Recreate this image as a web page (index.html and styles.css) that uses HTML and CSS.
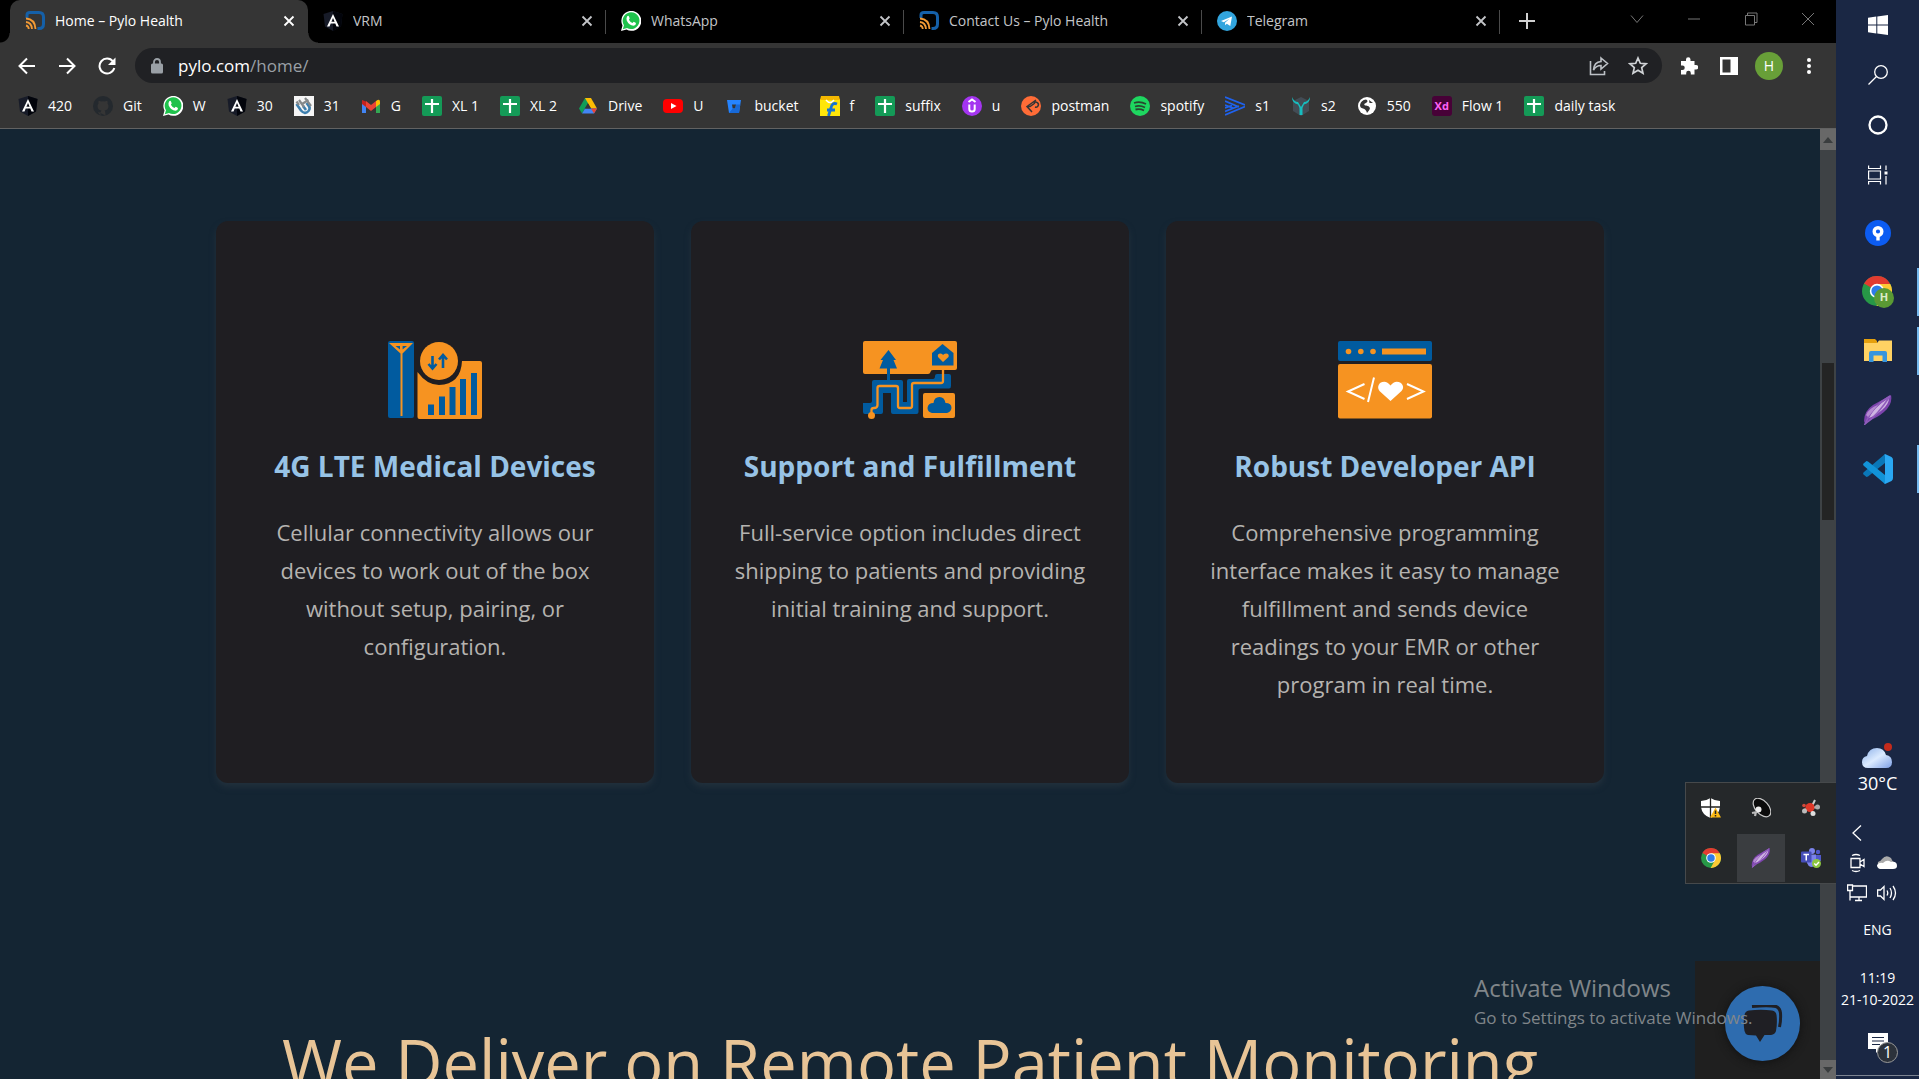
FILE: index.html
```html
<!DOCTYPE html>
<html lang="en">
<head>
<meta charset="utf-8">
<title>Home – Pylo Health</title>
<link rel="stylesheet" href="styles.css">
</head>
<body>
<svg class="defs" aria-hidden="true">
  <symbol id="pylo" viewBox="0 0 20 20"><path d="M2 7V4Q2 1.500 5 1.500H14Q18.500 1.500 18.500 6V13Q18.500 17.500 14 17.500H12.500" fill="none" stroke="#1560a8" stroke-width="3"/><path d="M1 7.500Q10 8 10.500 18M1 11Q6.500 11.500 7 18M1 14.500Q3.500 15 3.800 18" fill="none" stroke="#f29a35" stroke-width="1.800"/></symbol>
  <symbol id="angular" viewBox="0 0 20 20"><path d="M10 0 19.500 3 18 15.500 10 20 2 15.500 .5 3z" fill="#171b28"/><path d="M10 0 19.500 3 18 15.500 10 20z" fill="#02040b"/><path d="M10 3 4 15.500H6.500L7.700 12.500H12.300L13.500 15.500H16zM10 7 11.600 10.700H8.400z" fill="#fff" fill-rule="evenodd"/></symbol>
  <symbol id="whatsapp" viewBox="0 0 20 20"><path d="M0 20 1.500 14.500A10 10 0 1 1 5.500 18.600z" fill="#fff"/><path d="M1.800 18.200 3 14.200A8.400 8.400 0 1 1 6 17z" fill="#1fc24c"/><path d="M6.200 5.300Q7.500 4 8.200 6L8.700 7.500 7.900 8.700Q9.200 11.200 11.500 12L12.700 10.800 15 12Q15 14.500 12.500 14.800 8 14.500 5.700 9.500 5 7 6.200 5.300z" fill="#fff"/></symbol>
  <symbol id="telegram" viewBox="0 0 20 20"><circle cx="10" cy="10" r="10" fill="#32a5de"/><path d="M4 10 15 5.500 13.300 15 9.800 12.700 8.200 14.200 8 11.800 12.500 7.700 6.800 11.200z" fill="#fff"/></symbol>
  <symbol id="github" viewBox="0 0 20 20"><circle cx="10" cy="10" r="10" fill="#24292e"/><path d="M7.500 19.500V16.500Q4.500 17 3.500 14.500M7.500 17Q8 14.800 8.500 14.500 4.500 14 4.500 10 4.500 8.500 5.500 7.500 5 6 5.700 4.700 7 4.800 8 5.600 10 5 12 5.600 13 4.800 14.300 4.700 15 6 14.500 7.500 15.500 8.500 15.500 10 15.500 14 11.500 14.500 12.500 15 12.500 19.500z" fill="#353535"/></symbol>
  <symbol id="sheets" viewBox="0 0 20 20"><rect width="20" height="20" rx="2" fill="#149a57"/><path d="M10 3V17M3 8H17" stroke="#fff" stroke-width="2.200"/></symbol>
  <symbol id="close" viewBox="0 0 12 12"><path d="M1.500 1.500 10.500 10.500M10.500 1.500 1.500 10.500" stroke="currentColor" stroke-width="1.800"/></symbol>
  <symbol id="chrome" viewBox="0 0 30 30"><circle cx="15" cy="15" r="15" fill="#279847"/><path d="M15 15 2 7.500A15 15 0 0 1 28 7.500z" fill="#e23b30"/><path d="M15 8H28.300A15 15 0 0 1 14.500 30L21 18z" fill="#fcc934"/><circle cx="15" cy="15" r="7.200" fill="#fff"/><circle cx="15" cy="15" r="5.600" fill="#2e7bea"/></symbol>
  <symbol id="feather" viewBox="0 0 28 30"><path d="M27 0Q29 9 20 17 13 23 4 26L1.500 30 0 26Q0 16 9 10 18 5 27 0z" fill="#7c43ac"/><path d="M25 3Q25 9 18 15 11 21 5 23 10 12 25 3z" fill="#ceb4e2"/><path d="M26 1Q8 11 1 29 14 20 26 1z" fill="none" stroke="#8f5cbb" stroke-width="1.500"/><path d="M2 20Q5 13 14 10L4 22z" fill="#b58bd1"/></symbol>
  <symbol id="cloud" viewBox="0 0 32 22"><path d="M7 21Q1 21 1 15 1 10 6 9 8 1 16 1 23 1 25 8 31 9 31 15 31 21 25 21z" fill="url(#sky)"/></symbol>
  <linearGradient id="sky" x1="0" y1="0" x2="1" y2="1"><stop offset="0" stop-color="#89aee8"/><stop offset=".5" stop-color="#dcebff"/><stop offset="1" stop-color="#7d9fe5"/></linearGradient>
</svg>

<div class="desktop">
  <div class="browser">
    <div class="tabstrip">
      <div class="tabs" role="tablist">
        <div class="tab active" role="tab"><svg class="fav"><use href="#pylo"/></svg><span>Home – Pylo Health</span><button class="close" aria-label="Close tab"><svg><use href="#close"/></svg></button></div>
        <div class="tab" role="tab"><svg class="fav"><use href="#angular"/></svg><span>VRM</span><button class="close" aria-label="Close tab"><svg><use href="#close"/></svg></button></div>
        <div class="tab" role="tab"><svg class="fav"><use href="#whatsapp"/></svg><span>WhatsApp</span><button class="close" aria-label="Close tab"><svg><use href="#close"/></svg></button></div>
        <div class="tab" role="tab"><svg class="fav"><use href="#pylo"/></svg><span>Contact Us – Pylo Health</span><button class="close" aria-label="Close tab"><svg><use href="#close"/></svg></button></div>
        <div class="tab" role="tab"><svg class="fav"><use href="#telegram"/></svg><span>Telegram</span><button class="close" aria-label="Close tab"><svg><use href="#close"/></svg></button></div>
      </div>
      <button class="newtab" aria-label="New tab"><svg width="16" height="16" viewBox="0 0 16 16"><path d="M8 0V16M0 8H16" stroke="#d0d0d0" stroke-width="2"/></svg></button>
      <div class="wincontrols">
        <button aria-label="Search tabs"><svg width="14" height="14" viewBox="0 0 14 14"><path d="M1 3.500 7 10.500 13 3.500"/></svg></button>
        <button aria-label="Minimize"><svg width="14" height="14" viewBox="0 0 14 14"><path d="M1 7H13"/></svg></button>
        <button aria-label="Restore"><svg width="14" height="14" viewBox="0 0 14 14"><path d="M1.500 3.500H10.500V13H1.500zM3.500 3.500V1H13V10.500H10.500"/></svg></button>
        <button aria-label="Close"><svg width="14" height="14" viewBox="0 0 14 14"><path d="M1 1 13 13M13 1 1 13"/></svg></button>
      </div>
    </div>

    <div class="toolbar">
      <div class="nav">
        <button aria-label="Back"><svg width="18" height="18" viewBox="0 0 18 18"><path d="M17 9H2M9 1.500 1.500 9 9 16.500" fill="none" stroke="#fff" stroke-width="2"/></svg></button>
        <button aria-label="Forward"><svg width="18" height="18" viewBox="0 0 18 18"><path d="M1 9H16M9 1.500 16.500 9 9 16.500" fill="none" stroke="#fff" stroke-width="2"/></svg></button>
        <button aria-label="Reload"><svg width="18" height="18" viewBox="0 0 18 18"><path d="M15 4.500A7.500 7.500 0 1 0 16.300 11" fill="none" stroke="#fff" stroke-width="2"/><path d="M17.500 .5V8H10z" fill="#fff"/></svg></button>
      </div>
      <div class="omnibox">
        <svg width="12" height="16" viewBox="0 0 12 16"><rect y="5.500" width="12" height="10" rx="1.500" fill="#9aa0a6"/><path d="M3 6V4A3 3 0 0 1 9 4V6" fill="none" stroke="#9aa0a6" stroke-width="1.800"/></svg>
        <p class="url">pylo.com<span>/home/</span></p>
        <button aria-label="Share"><svg width="20" height="20" viewBox="0 0 20 20" fill="none" stroke="#bdc1c6" stroke-width="1.600"><path d="M1.500 5V18.500H15.500V15"/><path d="M12 2 18.500 7.500 12 13V9.500Q7 9.500 4.500 14 5 6 12 5.500z"/></svg></button>
        <button aria-label="Bookmark this page"><svg width="20" height="20" viewBox="0 0 20 20"><path d="M10 2 12.300 7.300 18 7.800 13.700 11.600 15 17.300 10 14.300 5 17.300 6.300 11.600 2 7.800 7.700 7.300z" fill="none" stroke="#d0d3d6" stroke-width="1.700"/></svg></button>
      </div>
      <div class="tools">
        <button aria-label="Extensions"><svg width="18" height="18" viewBox="0 0 18 18"><path d="M2 4H6V2.500A2.200 2.200 0 0 1 10.500 2.500V4H14.500V8H16A2.200 2.200 0 0 1 16 12.500H14.500V17.500H10.800V16A2.300 2.300 0 0 0 6.200 16V17.500H1V13H2.500A2.200 2.200 0 0 0 2.500 8.500H1V4z" fill="#fff"/></svg></button>
        <button aria-label="Side panel"><svg width="18" height="18" viewBox="0 0 18 18"><path d="M0 0H18V18H0zM2.500 2.500V15.500H10.500V2.500z" fill="#fff" fill-rule="evenodd"/></svg></button>
        <button aria-label="Profile"><span class="avatar">H</span></button>
        <button aria-label="Menu"><svg width="4" height="16" viewBox="0 0 4 16" fill="#fff"><circle cx="2" cy="2" r="2"/><circle cx="2" cy="8" r="2"/><circle cx="2" cy="14" r="2"/></svg></button>
      </div>
    </div>

    <nav class="bookmarks">
      <a href="#"><svg><use href="#angular"/></svg>420</a>
      <a href="#"><svg><use href="#github"/></svg>Git</a>
      <a href="#"><svg><use href="#whatsapp"/></svg>W</a>
      <a href="#"><svg><use href="#angular"/></svg>30</a>
      <a href="#"><svg viewBox="0 0 20 20"><rect width="20" height="20" fill="#f5f5f5"/><path d="M2.500 8 7 14.500Q11 19 14.500 15 17 12 14 9L12.500 7M9 10 12 14" fill="none" stroke="#3d7fae" stroke-width="2.600"/><path d="M5 4 10 11M11 2 17 10M8 8 14.500 4M2.500 5.500 5 9" stroke="#85898b" stroke-width="2.200"/></svg>31</a>
      <a href="#"><svg viewBox="0 0 20 20"><path d="M1 5V17H5V9z" fill="#4285f4"/><path d="M19 5V17H15V9z" fill="#34a853"/><path d="M1 4 5 5.500V11L1 8z" fill="#c5221f"/><path d="M5 5 10 9 15 5V11L10 15 5 11z" fill="#ea4335"/><path d="M15 5Q19 2 19 6V8L15 11z" fill="#fbbc04"/></svg>G</a>
      <a href="#"><svg><use href="#sheets"/></svg>XL 1</a>
      <a href="#"><svg><use href="#sheets"/></svg>XL 2</a>
      <a href="#"><svg viewBox="0 0 20 20"><path d="M7 2H10L10 7 4 17.500 1 12.500z" fill="#109d58"/><path d="M7 2H13L19 12.500H13z" fill="#fbbc04"/><path d="M4 17.500 7 12.500H19L16 17.500z" fill="#4285f4"/><path d="M13 12.500H19L16 17.500z" fill="#ea4335"/><path d="M10 7.500 13 12.500H7z" fill="#353535"/></svg>Drive</a>
      <a href="#"><svg viewBox="0 0 20 20"><rect y="3" width="20" height="14" rx="4" fill="#f00"/><path d="M8 7 13.500 10 8 13z" fill="#fff"/></svg>U</a>
      <a href="#"><svg viewBox="0 0 20 20"><path d="M3 4H17L15 17H5zM8 8.500 8.700 12.500H11.300L12 8.500z" fill="#2684ff" fill-rule="evenodd"/><path d="M12 8.500H16.300L15 17H5L8.700 12.500H11.300z" fill="#1769d8"/></svg>bucket</a>
      <a href="#"><svg viewBox="0 0 20 20"><path d="M0 3H20V20H0z" fill="#ffe60a"/><path d="M1 0H19L20 4H0z" fill="#f4b800"/><path d="M6 4Q10 9 14 4" fill="none" stroke="#fff" stroke-width="1.500"/><path d="M17 8Q12 6 11 12L8.500 20M7 14H15" fill="none" stroke="#1773d2" stroke-width="2.800"/></svg>f</a>
      <a href="#"><svg><use href="#sheets"/></svg>suffix</a>
      <a href="#"><svg viewBox="0 0 20 20"><circle cx="10" cy="10" r="10" fill="#a435f0"/><path d="M6.500 6 10 3.500 13.500 6M7.300 8.500V13Q7.300 15.500 10 15.500 12.700 15.500 12.700 13V8.500" fill="none" stroke="#fff" stroke-width="2"/></svg>u</a>
      <a href="#"><svg viewBox="0 0 20 20"><circle cx="10" cy="10" r="10" fill="#ff6c37"/><path d="M15 4 6 10.500 11 16M6 10.500H9L14 7M13 7A2.500 2.500 0 1 1 14 11" fill="none" stroke="#353535" stroke-width="1.500"/></svg>postman</a>
      <a href="#"><svg viewBox="0 0 20 20"><circle cx="10" cy="10" r="10" fill="#1ed760"/><path d="M4 7Q10 5 16 8M5 10.500Q10 9 15 11.500M5.500 13.500Q10 12.500 14 14.500" fill="none" stroke="#29452f" stroke-width="1.800"/></svg>spotify</a>
      <a href="#"><svg viewBox="0 0 20 20"><path d="M0 1 20 9M0 5 14 11M0 9 8 12M0 19 20 10.500M0 15.500 14 10M0 12 7 9.500" stroke="#1f62ee" stroke-width="1.800"/></svg>s1</a>
      <a href="#"><svg viewBox="0 0 20 20"><path d="M10 1 18 5V15L10 20 2 15V5z" fill="#434c55"/><path d="M1 1Q1 7 7 8.500L8.500 12V19H11.500V12L13 8.500Q19 7 19 1 17 6 13 6L10 11 7 6Q3 6 1 1z" fill="#16bdbf"/></svg>s2</a>
      <a href="#"><svg viewBox="0 0 20 20"><circle cx="10" cy="10" r="9" fill="#fff"/><path d="M3 9Q4 4 9 3.500 12 5 9 7 6 8 8 9.500 12 9 13 12 13 14 10 17 9 13 6 12.500 3 12 3 9M12 4 16 7 12.500 7z" fill="#353535"/></svg>550</a>
      <a href="#"><span class="xd">Xd</span>Flow 1</a>
      <a href="#"><svg><use href="#sheets"/></svg>daily task</a>
    </nav>

    <div class="viewport">
      <main class="page">
        <section class="features">
          <article class="card">
            <svg class="art" viewBox="0 0 94 78"><rect width="26" height="77" rx="2" fill="#015b9f"/><path d="M1 2H25L14.500 12.500V75H12.500V12.500z" fill="#f69321"/><path d="M7.500 5H12V8.500zM14.500 5H19L14.500 8.500z" fill="#015b9f"/><path d="M13.500 4V12" stroke="#f69321" stroke-width="1.500"/><path d="M29.500 31Q39 44 51 44 73 43 74 20H92Q94 20 94 22V76Q94 78 92 78H31.500Q29.500 78 29.500 76z" fill="#f69321"/><circle cx="51" cy="20" r="19" fill="#f69321"/><path d="M44.500 15V27M40.500 23 44.500 27.500 48.500 23M55 27V15M51 18.500 55 14 59 18.500" fill="none" stroke="#015b9f" stroke-width="2.600"/><path d="M40 63.500H46V74H40zM51 55.500H57V74H51zM61.500 46H67.500V74H61.500zM72 38H78V74H72zM83 32H89V74H83z" fill="#015b9f"/></svg>
            <h3>4G LTE Medical Devices</h3>
            <p>Cellular connectivity allows our devices to work out of the box without setup, pairing, or configuration.</p>
          </article>
          <article class="card">
            <svg class="art" viewBox="0 0 94 78"><path d="M2 0H92Q94 0 94 2V27Q94 29 92 29H70Q67.500 29 67.500 31 67 33 65 33H2Q0 33 0 31V2Q0 0 2 0z" fill="#f69321"/><path d="M0 62H7Q9 62 9 60V41Q9 39 11 39H38Q40 39 40 41V61H44V40Q44 38 46 38H70Q72 38 72 35 72 33 74 33H86Q88 33 88 35V45Q88 47.500 86 47.500H58Q55.500 47.500 55.500 50V71Q55.500 73 53.500 73H30Q28 73 28 71V52H20V71Q20 73 18 73H2Q0 73 0 71z" fill="#015b9f"/><path d="M25.500 9 33 19H30.500L34 27.500H27V40H24V27.500H16.500L20 19H17.500z" fill="#015b9f"/><path d="M69 12 79.500 3 90.500 12V24.500H69z" fill="#015b9f"/><path d="M80 21 75 16Q74 12.500 77.500 12.500 79.500 12.500 80 14 81 12.500 83 12.500 86.500 12.500 85.500 16z" fill="#f69321"/><path d="M8.500 73V69Q8.500 67 11 67 14.500 67 14.500 64V47Q14.500 45 16.500 45H33Q35 45 35 47V65Q35 67 37 67H47Q49 67 49 65V44Q49 42 51 42H78Q80 42 80 40V29" fill="none" stroke="#f69321" stroke-width="2.300"/><circle cx="8.500" cy="74.500" r="3.500" fill="#f69321"/><rect x="60" y="52" width="32" height="25" rx="2" fill="#f69321"/><path d="M69 72Q64.500 71 64.500 67 65 62 70.500 62 71 56 76.500 56 81.500 56 82.500 62 88.500 62 88.500 67 88 71 84 72z" fill="#015b9f"/></svg>
            <h3>Support and Fulfillment</h3>
            <p>Full-service option includes direct shipping to patients and providing initial training and support.</p>
          </article>
          <article class="card">
            <svg class="art" viewBox="0 0 94 78"><rect width="94" height="20" rx="2" fill="#015b9f"/><circle cx="10.500" cy="10.500" r="2.800" fill="#f69321"/><circle cx="22.800" cy="10.500" r="2.800" fill="#f69321"/><circle cx="35" cy="10.500" r="2.800" fill="#f69321"/><rect x="44" y="7.500" width="44" height="6" fill="#f69321"/><rect y="23" width="94" height="54.500" rx="2" fill="#f69321"/><path d="M26.500 43 10 50.500 26.500 58M36 36.500 30 61M69 43 85.500 50.500 69 58" fill="none" stroke="#fff" stroke-width="2"/><path d="M52.500 60 41.500 50Q38.500 46 42 42 48 38.500 52.500 44.500 57 38.500 63 42 67 46 63.500 50z" fill="#fff"/></svg>
            <h3>Robust Developer API</h3>
            <p>Comprehensive programming interface makes it easy to manage fulfillment and sends device readings to your EMR or other program in real time.</p>
          </article>
        </section>
        <h2 class="deliver">We Deliver on Remote Patient Monitoring</h2>
        <div class="chat"><button aria-label="Open chat"><svg width="40" height="38" viewBox="0 0 40 38"><path d="M9 1.500Q25 0 33 1.500 37 3 37.500 8 38 16 36.500 22" fill="none" stroke="#1f1f24" stroke-width="3"/><path d="M6 5.500Q18 4 29 5.500 33 6 33.500 10 34.500 18 33 26 32 29.500 28 30H21.500L17 37 13 30.500 5 30Q2 29 1.500 26 0 18 1.500 10 2 6 6 5.500z" fill="#1f1f24"/></svg></button></div>
      </main>
      <div class="scrollbar">
        <button aria-label="Scroll up"><svg width="10" height="6" viewBox="0 0 10 6"><path d="M5 0 10 6H0z" fill="#3a3d3e"/></svg></button>
        <div class="track"><div class="thumb"></div></div>
        <button class="down" aria-label="Scroll down"><svg width="10" height="6" viewBox="0 0 10 6"><path d="M0 0H10L5 6z" fill="#3a3d3e"/></svg></button>
      </div>
    </div>

    <div class="activate"><strong>Activate Windows</strong><span>Go to Settings to activate Windows.</span></div>

    <div class="traypop">
      <button aria-label="Windows Security"><svg width="20" height="20" viewBox="0 0 20 20"><path d="M9.500 0Q14 3 19 3V9Q18 17 9.500 20 1 17 0 9V3Q5 3 9.500 0z" fill="#fff"/><path d="M9.500 0V20M0 9H19" stroke="#222" stroke-width="1.300"/><path d="M14.500 9.500 20 19.500H9z" fill="#fdb913"/><path d="M14.500 12.500V16M14.500 17V18.500" stroke="#222" stroke-width="1.500"/></svg></button>
      <button aria-label="Audio"><svg width="20" height="20" viewBox="0 0 20 20"><ellipse cx="11" cy="9.500" rx="11" ry="6.500" transform="rotate(48 11 9.500)" fill="#0b0b0b" stroke="#c9c9c9" stroke-width="1.200"/><circle cx="7.500" cy="11.500" r="3" fill="#eee"/><path d="M6 14 1 15M5 14 4 18" stroke="#bbb" stroke-width="2.200"/></svg></button>
      <button aria-label="Molecule"><svg width="20" height="20" viewBox="0 0 20 20"><path d="M10 10 14 2M9 10 3 12M9 10 17 9M9 10 12 16" stroke="#ccc" stroke-width="2"/><circle cx="9" cy="9.500" r="4.500" fill="#df3828"/><circle cx="3.500" cy="13" r="2.500" fill="#bbb"/><circle cx="16.500" cy="9" r="2.500" fill="#aaa"/><circle cx="12" cy="15.500" r="2.500" fill="#ddd"/><circle cx="3" cy="7.500" r="1.800" fill="#d34a3c"/></svg></button>
      <button aria-label="Chrome"><svg width="20" height="20"><use href="#chrome"/></svg></button>
      <button class="selected" aria-label="Feather"><svg width="20" height="20"><use href="#feather"/></svg></button>
      <button aria-label="Teams"><svg width="20" height="20" viewBox="0 0 20 20"><circle cx="11" cy="3" r="3" fill="#7b83eb"/><circle cx="17" cy="4" r="2.200" fill="#5059c9"/><path d="M6 6.500H15V14Q14 19 10 19 7 18 6 15z" fill="#7b83eb"/><path d="M15 7H20V13H15z" fill="#5059c9"/><rect y="3.500" width="10.500" height="11" rx="1" fill="#464eb8"/><path d="M2.500 6.500H8M5.250 6.500V12.500" stroke="#fff" stroke-width="1.500"/><circle cx="15.500" cy="15.500" r="4.500" fill="#8cc63f"/><path d="M13.300 15.500 15 17.200 18 14" fill="none" stroke="#fff" stroke-width="1.400"/></svg></button>
    </div>
  </div>

  <aside class="taskbar">
    <div class="system">
      <button aria-label="Start"><svg width="20" height="20" viewBox="0 0 20 20"><path d="M0 2.800 8.300 1.600V9.500H0zM9.300 1.500 20 0V9.500H9.300zM0 10.500H8.300V18.400L0 17.200zM9.300 10.500H20V20L9.300 18.500z" fill="#fff"/></svg></button>
      <button aria-label="Search"><svg width="20" height="20" viewBox="0 0 20 20" fill="none" stroke="#fff" stroke-width="1.300"><circle cx="13" cy="7" r="6.300"/><path d="M8.500 11.500 .5 19.500"/></svg></button>
      <button aria-label="Cortana"><svg width="20" height="20" viewBox="0 0 20 20"><circle cx="10" cy="10" r="8.500" fill="none" stroke="#fff" stroke-width="2.300"/></svg></button>
      <button aria-label="Task view"><svg width="20" height="20" viewBox="0 0 20 20" fill="none" stroke="#fff" stroke-width="1.200"><path d="M.6 .5V3.500H12.500V.5M.6 19.500V16.500H12.500V19.500M.6 6H12.500V14H.6zM18 .5V5M18 11V19.500"/><path d="M16.500 6.500H19.500V9.500H16.500z" fill="#fff" stroke="none"/></svg></button>
    </div>
    <div class="apps">
      <button aria-label="Sourcetree"><svg width="26" height="26" viewBox="0 0 26 26"><circle cx="13" cy="13" r="13" fill="#0c5cf2"/><circle cx="13" cy="11.500" r="3.800" fill="none" stroke="#fff" stroke-width="3.400"/><path d="M11.300 15H14.700V20.500H11.300z" fill="#fff"/></svg></button>
      <button class="running" aria-label="Chrome"><svg width="32" height="32" viewBox="0 0 32 32"><use href="#chrome" width="30" height="30"/><circle cx="22" cy="22" r="10" fill="#5a9a34"/></svg><span class="initial">H</span></button>
      <button class="running" aria-label="File Explorer"><svg width="28" height="23" viewBox="0 0 28 23"><path d="M0 0H11L13 2V5H0z" fill="#e5a00d"/><path d="M0 4H13L15 1.500H28V22H0z" fill="#ffd263"/><path d="M5 23V14Q5 12 7 12H21Q23 12 23 14V23H18.500V16.500H9.500V23z" fill="#3795de"/></svg></button>
      <button aria-label="Feather"><svg width="28" height="30"><use href="#feather"/></svg></button>
      <button class="running" aria-label="Visual Studio Code"><svg width="30" height="30" viewBox="0 0 30 30"><path d="M22 0V9L5 22.500 3.500 23 .5 20.500Q-.5 19 1 18z" fill="#0a77b8"/><path d="M22 30V21L5 7.500 3.500 7 .5 9.500Q-.5 11 1 12z" fill="#1293d8"/><path d="M22 0 28.500 3Q30 4 30 6V24Q30 26 28.500 27L22 30Q21 29.500 22 28V2Q21 1 22 0z" fill="#2aa8f3"/></svg></button>
    </div>
    <div class="status">
      <div class="weather"><svg width="32" height="26" viewBox="0 0 32 26"><use href="#cloud" y="4" width="32" height="22"/><circle cx="27" cy="4" r="4" fill="#c42b1c"/></svg><span>30°C</span></div>
      <div class="trayicons">
        <svg width="20" height="20" viewBox="0 0 20 20"><path d="M14 2.500 6 10 14 17.500"/></svg><i></i>
        <svg width="20" height="20" viewBox="0 0 20 20"><path d="M4 5.500H13V14.500H4zM13 9 17 6.500V13.500L13 11M5 2.500Q9 .5 13 2.500M5 17.500Q9 19.500 13 17.500"/></svg>
        <svg width="20" height="20" viewBox="0 0 20 20"><path d="M4 14Q0 13 1 9 4 8 5 6 9 1 14 5 15 8 17 9L10 14z" fill="#aaa" stroke="none"/><path d="M3 16Q0 15 0 12 2 9 6 10 10 6 14 9 20 8 20 13 20 16 16 16z" fill="#fff" stroke="none"/></svg>
        <svg width="20" height="20" viewBox="0 0 20 20"><path d="M5.500 3H19.500V14H3M12 14V17.500M8 17.500H15M.6 2H5.500V7.500H.6zM3 7.500V17.500"/></svg>
        <svg width="20" height="20" viewBox="0 0 20 20"><path d="M.6 7H3.500L7 3.500V16.500L3.500 13H.6zM10 7.500Q11.500 10 10 12.500M13 5Q16 10 13 15M16 3Q21 10 16 17"/></svg>
      </div>
      <span class="lang">ENG</span>
      <div class="clock"><span>11:19</span><span>21-10-2022</span></div>
      <button class="notify" aria-label="Notifications"><svg width="20" height="20" viewBox="0 0 20 20"><path d="M0 0H20V16H12L8 20V16H0z" fill="#fff"/><path d="M4 4.500H16M4 8H16M4 11.500H12" stroke="#1a2744" stroke-width="1.200"/></svg><span>1</span></button>
    </div>
  </aside>
</div>
</body>
</html>
```
FILE: styles.css
```css
* { box-sizing: border-box; }
body { margin: 0; font-family: "Open Sans", sans-serif; font-size: 14px; color: #fff; background: #142533; }
button { border: 0; padding: 0; margin: 0; background: none; color: inherit; font: inherit; display: flex; align-items: center; justify-content: center; }
svg { display: block; flex: none; }
h2, h3, p { margin: 0; }
.defs { position: absolute; width: 0; height: 0; }

.desktop { display: flex; height: 100vh; overflow: hidden; }
.browser { position: relative; flex: 1; min-width: 0; display: flex; flex-direction: column; }

.tabstrip { display: flex; height: 43px; background: #000; padding-left: 10px; }
.tabs { display: flex; flex: 0 1 1490px; min-width: 0; }
.tab { flex: 1 1 0; min-width: 0; display: flex; align-items: center; gap: 10px; padding: 0 13px 2px 15px; color: #c3c5c8; position: relative; }
.tab:not(.active)::after { content: ""; position: absolute; right: 0; top: 10px; width: 1px; height: 24px; background: #4a4a4a; }
.tab span { flex: 1; white-space: nowrap; overflow: hidden; }
.tab.active { background: #353535; color: #fff; border-radius: 10px 10px 0 0; }
.tab.active::before, .tab.active::after { content: ""; position: absolute; bottom: 0; width: 10px; height: 10px; }
.tab.active::before { left: -10px; background: radial-gradient(circle at 0 0, #000 9px, #353535 10px); }
.tab.active::after { right: -10px; background: radial-gradient(circle at 100% 0, #000 9px, #353535 10px); }
.fav { width: 20px; height: 20px; }
.close svg { width: 12px; height: 12px; }
.newtab { width: 54px; padding-bottom: 1px; }
.wincontrols { display: flex; margin-left: auto; }
.wincontrols button { width: 57px; height: 37px; }
.wincontrols svg { fill: none; stroke: #777; stroke-width: 1; }

.toolbar { display: flex; align-items: center; height: 45px; background: #353535; }
.nav { display: flex; width: 135px; padding-left: 7px; }
.nav button { width: 40px; }
.omnibox { flex: 1; display: flex; align-items: center; height: 35px; border-radius: 18px; background: #202124; padding: 0 5px 0 16px; }
.url { flex: 1; margin-left: 15px; font-size: 17px; line-height: 22px; }
.url span { color: #9aa0a6; }
.omnibox button { width: 39px; }
.tools { display: flex; padding: 0 7px; }
.tools button { width: 40px; }
.avatar { width: 28px; height: 28px; border-radius: 50%; background: #689f38; line-height: 28px; text-align: center; }

.bookmarks { display: flex; align-items: center; gap: 21px; height: 41px; padding: 0 18px 5px; background: #353535; border-bottom: 1px solid #626262; }
.bookmarks a { display: flex; align-items: center; gap: 10px; color: #fff; text-decoration: none; white-space: nowrap; }
.bookmarks svg { width: 20px; height: 20px; }
.xd { width: 20px; height: 20px; border-radius: 3px; background: #470137; color: #ff61f6; font-size: 11px; font-weight: 700; line-height: 20px; text-align: center; }

.viewport { flex: 1; min-height: 0; display: flex; }
.page { position: relative; flex: 1; min-width: 0; overflow: hidden; background: #142533; }
.features { display: grid; grid-template-columns: repeat(3, 1fr); gap: 37px; max-width: 1388px; margin: 92px auto 0; }
.card { min-height: 562px; padding: 120px 42px 60px; border-radius: 12px; background: #1f1e22; box-shadow: 0 4px 6px #22303c; text-align: center; }
.art { width: 94px; height: 78px; margin: 0 auto; }
.card h3 { margin: 24px -10px; font-size: 28px; line-height: 46px; font-weight: 700; color: #97c3e6; }
.card p { font-size: 22px; line-height: 38px; color: #b5b3b0; }
.deliver { margin-top: 234px; text-align: center; font-size: 65px; line-height: 90px; font-weight: 400; color: #e8c496; white-space: nowrap; }
.chat { position: absolute; right: 0; bottom: 0; width: 125px; height: 118px; padding: 25px 20px 0; background: #1f1f1f; display: flex; justify-content: flex-end; }
.chat button { width: 75px; height: 75px; border-radius: 50%; background: #2e6caf; box-shadow: 0 1px 10px #111; }

.scrollbar { width: 16px; display: flex; flex-direction: column; background: #3e4245; }
.scrollbar button { height: 21px; background: #686868; }
.scrollbar .down { height: 19px; }
.track { flex: 1; display: flex; flex-direction: column; align-items: center; }
.track::before { content: ""; flex: 213; }
.track::after { content: ""; flex: 540; }
.thumb { flex: 157; width: 12px; background: #242424; }

.activate { position: absolute; right: 78px; bottom: 48px; width: 284px; display: flex; flex-direction: column; color: #80868a; white-space: nowrap; }
.activate strong { font-size: 24px; font-weight: 400; line-height: 34px; }
.activate span { font-size: 17px; line-height: 26px; }
.traypop { position: absolute; right: 0; bottom: 195px; width: 151px; height: 102px; display: grid; grid-template-columns: 50px 50px 50px; grid-template-rows: 50px 50px; border: 1px solid #46494b; border-right: 0; background: #25282a; }
.traypop button { margin: 1px; }
.traypop .selected { background: #3a3d40; }

.taskbar { width: 83px; background: #1a2744; display: flex; flex-direction: column; }
.system button { width: 100%; height: 50px; }
.apps { padding-top: 3px; }
.apps button { position: relative; width: 100%; height: 59px; }
.running::after { content: ""; position: absolute; right: 0; top: 6px; width: 2px; height: 48px; background: #76b9ed; }
.initial { position: absolute; left: 38px; top: 24px; width: 20px; font-size: 11px; font-weight: 700; line-height: 22px; text-align: center; color: #dcebc8; }
.status { margin-top: auto; height: 336px; display: flex; flex-direction: column; align-items: center; text-align: center; }
.weather { display: flex; flex-direction: column; align-items: center; font-size: 18px; line-height: 28px; }
.trayicons { display: grid; grid-template-columns: 20px 20px; gap: 10px; margin-top: 26px; padding-right: 22px; align-self: end; }
.trayicons { fill: none; stroke: #fff; stroke-width: 1.3px; }
.lang { margin-top: 16px; line-height: 22px; }
.clock { display: flex; flex-direction: column; margin-top: 26px; line-height: 22px; }
.notify { position: relative; margin-top: 18px; padding-bottom: 18px; width: 100%; border-bottom: 1px solid #7d8492; height: 47px; }
.notify span { position: absolute; right: 21px; top: 13px; width: 21px; height: 21px; border: 1px solid #999; border-radius: 50%; background: #2c323b; font-size: 16px; line-height: 19px; }
```
